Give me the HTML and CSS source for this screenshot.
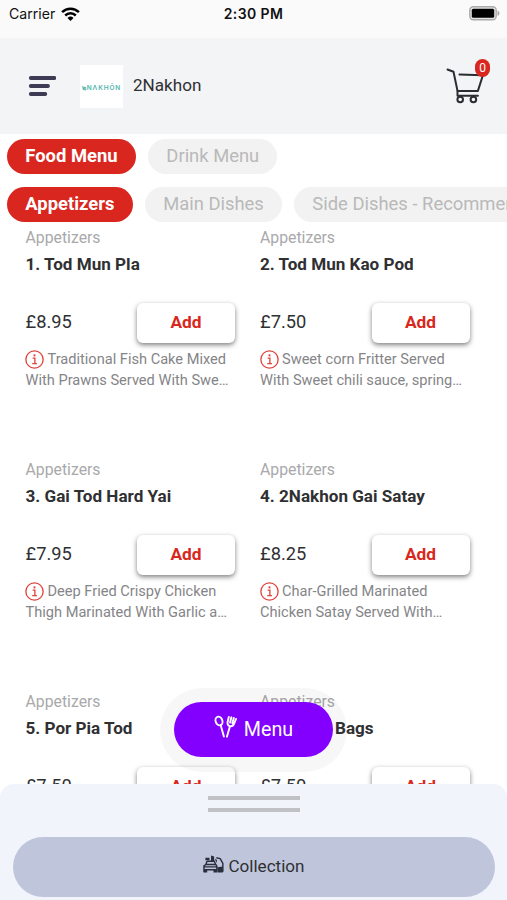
FILE: index.html
```html
<!DOCTYPE html>
<html lang="en">
<head>
<meta charset="utf-8">
<meta name="viewport" content="width=device-width, initial-scale=1">
<title>2Nakhon</title>
<link rel="stylesheet" href="styles.css">
</head>
<body>
<svg class="defs" aria-hidden="true">
  <symbol id="info" viewBox="0 0 20 20">
    <g fill="none" stroke="currentColor" stroke-width="1.4">
      <circle cx="10" cy="10" r="9.1"/>
      <path d="M8 8.6h2.4v5.6M7.6 14.4h5"/>
    </g>
    <circle cx="10" cy="5.7" r="1.1" fill="currentColor"/>
  </symbol>
</svg>
<div class="screen">
  <div class="status">
    <div class="carrier">Carrier
      <svg width="19" height="14" viewBox="0 0 19 14"><g fill="none" stroke="#000" stroke-width="2.5"><path d="M1.1 5.2a12 12 0 0 1 16.8 0"/><path d="M4.2 8.5a7.6 7.6 0 0 1 10.6 0"/></g><path d="M6.5 10.9a4.3 4.3 0 0 1 6 0l-3 3z"/></svg>
    </div>
    <div class="time">2:30 PM</div>
    <svg class="battery" width="31" height="15" viewBox="0 0 31 15"><rect x=".8" y=".8" width="26.4" height="13" rx="3.5" fill="#e4e4e4" stroke="#aaa" stroke-width="1.4"/><rect x="2.8" y="2.8" width="22.4" height="9" rx="1.5"/><path d="M28.5 4.6q2 .8 2 2.7t-2 2.7z" fill="#aaa"/></svg>
  </div>
  <header class="header">
    <svg class="burger" width="28" height="20" viewBox="0 0 28 20"><path d="M2.8 2h23.6M2.8 10h17.2M2.8 18h14.5" fill="none" stroke="#3d3b53" stroke-width="3.8" stroke-linecap="round"/></svg>
    <div class="logo"><span>๒NΛKHŌN</span></div>
    <div class="name">2Nakhon</div>
    <div class="cart">
      <svg width="38" height="36" viewBox="0 0 38 36"><g fill="none" stroke="#292d32" stroke-width="2" stroke-linecap="round" stroke-linejoin="round"><path d="M1.5 1.5l6 2.2 4 19.2h20.4l5-15.6-23.4-.9"/><path d="M11.5 23v4.8h20.4"/><circle cx="14.2" cy="31.5" r="2.8"/><circle cx="27.4" cy="31.5" r="2.8"/></g></svg>
      <span class="badge">0</span>
    </div>
  </header>
  <nav class="tabs">
    <div class="tab on food">Food Menu</div>
    <div class="tab drink">Drink Menu</div>
  </nav>
  <nav class="tabs second">
    <div class="tab on app">Appetizers</div>
    <div class="tab main">Main Dishes</div>
    <div class="tab side">Side Dishes - Recommended</div>
  </nav>
  <main class="grid">
    <article class="item">
      <div class="cat">Appetizers</div><h3>1. Tod Mun Pla</h3>
      <div class="buy"><span class="price">£8.95</span><button>Add</button></div>
      <p><svg class="info"><use href="#info"/></svg>Traditional Fish Cake Mixed<br>With Prawns Served With Swe…</p>
    </article>
    <article class="item">
      <div class="cat">Appetizers</div><h3>2. Tod Mun Kao Pod</h3>
      <div class="buy"><span class="price">£7.50</span><button>Add</button></div>
      <p><svg class="info"><use href="#info"/></svg>Sweet corn Fritter Served<br>With Sweet chili sauce, spring…</p>
    </article>
    <article class="item">
      <div class="cat">Appetizers</div><h3>3. Gai Tod Hard Yai</h3>
      <div class="buy"><span class="price">£7.95</span><button>Add</button></div>
      <p><svg class="info"><use href="#info"/></svg>Deep Fried Crispy Chicken<br>Thigh Marinated With Garlic a…</p>
    </article>
    <article class="item">
      <div class="cat">Appetizers</div><h3>4. 2Nakhon Gai Satay</h3>
      <div class="buy"><span class="price">£8.25</span><button>Add</button></div>
      <p><svg class="info"><use href="#info"/></svg>Char-Grilled Marinated<br>Chicken Satay Served With…</p>
    </article>
    <article class="item">
      <div class="cat">Appetizers</div><h3>5. Por Pia Tod</h3>
      <div class="buy"><span class="price">£7.50</span><button>Add</button></div>
    </article>
    <article class="item">
      <div class="cat">Appetizers</div><h3 class="bags">Bags</h3>
      <div class="buy"><span class="price">£7.50</span><button>Add</button></div>
    </article>
  </main>
  <div class="halo"><div class="menu">
    <svg width="23" height="24" viewBox="0 0 23 24"><g fill="none" stroke="#fff" stroke-width="1.9" stroke-linecap="round" stroke-linejoin="round"><ellipse cx="5" cy="6" rx="3.4" ry="4.4" transform="rotate(-20 5 6)"/><path d="M6.7 10.3l3.2 11.2M15.9 11.5l-3 10.2M14.8 2l-1.2 5q-.5 3.3 2.2 4.2 3 .7 4.2-2.3L22 4M17.4 2.3l-1.3 5.3M19.8 3l-1.5 5.2"/></g></svg>
    <span>Menu</span></div></div>
  <footer class="sheet">
    <div class="handle"></div>
    <div class="collect">
      <svg width="22" height="19" viewBox="0 0 22 19"><g fill="none" stroke="#2b2e3d" stroke-width="1.5" stroke-linejoin="round"><path d="M1 17.5V11l2-1.5L4.2 6h7.6l1.5 3.5 1.2 1.5v6.5M1 12h13M1.5 15h12.5M3 9.5h10"/><path d="M14 2.5l4 .8 2.8 5V17"/></g><g fill="#2b2e3d"><path d="M1 15h3.4v3H1zM11 15h3.4v3H11zM15 12.5l5.8-1V18h-5.4zM2.5 2.5h4.3V5H2.5zM8.4 0l3.3 1v5H8.4zM12.4 3.5l2.4 1.4-.8 3z"/></g></svg>
      <span>Collection</span>
    </div>
  </footer>
</div>
</body>
</html>
```
FILE: styles.css
```css
* { box-sizing: border-box; }
body { margin: 0; font-family: Roboto, "Liberation Sans", sans-serif; color: #303033; background: #fff; }
.defs { position: absolute; width: 0; height: 0; }
.screen { position: relative; width: 507px; height: 900px; overflow: hidden; background: #fff; }
.status { height: 38px; padding: 4px 7px 0 9px; display: grid; grid-template-columns: 1fr auto 1fr; align-items: start; background: #fafafa; color: #111; font-family: Inter, sans-serif; line-height: 20px; }
.carrier { display: flex; align-items: center; gap: 6px; font-size: 14.1px; }
.time { font-size: 14px; font-weight: 600; letter-spacing: .4px; margin-right: 2px; }
.battery { justify-self: end; margin-top: 2px; }
.header { height: 96px; padding: 0 18px 0 28px; display: flex; align-items: center; background: #f2f4f6; }
.logo { width: 43px; height: 43px; margin: 0 10px 0 24px; padding-top: 3px; display: flex; align-items: center; justify-content: center; background: #fff; color: #4fb5ac; font: 600 6.5px Inter, sans-serif; letter-spacing: .9px; white-space: nowrap; }
.name { font-size: 17.1px; margin-top: -3px; }
.cart { position: relative; height: 36px; margin-left: auto; margin-right: 5px; }
.badge { position: absolute; right: -6px; top: -9px; width: 15px; height: 18px; border-radius: 8px; background: #d92720; color: #fff; font-size: 12px; line-height: 18px; text-align: center; }
.tabs { height: 35px; margin: 5px 0 0 7px; display: flex; gap: 12.5px; }
.second { margin-top: 13px; }
.tab { flex: none; height: 35px; border-radius: 18px; padding: 0 18px; background: #f2f2f2; color: #b9b9b9; font-size: 18.4px; line-height: 34px; white-space: nowrap; }
.on { background: #d92720; color: #fff; font-weight: 700; padding-left: 18.3px; padding-right: 18.3px; }
.grid { padding: 5px 0 0 25.5px; display: grid; grid-template-columns: 234.5px 234.5px; grid-auto-rows: 232px; }
.item { width: 210px; }
.cat { height: 22px; font-size: 15.8px; line-height: 22px; color: #a9a9ab; }
h3 { margin: 3px 0 0; height: 25px; font-size: 17.1px; line-height: 24px; font-weight: 700; white-space: nowrap; }
.bags { padding-left: 75px; }
.buy { height: 40px; margin-top: 26px; display: flex; align-items: center; justify-content: space-between; }
.price { font-size: 18.3px; margin-top: -3px; }
button { width: 98px; height: 40px; margin-right: .5px; padding: 0 0 2px; border: 0; border-radius: 6px; background: #fff; color: #d92720; box-shadow: 0 2px 5px rgba(0,0,0,.5); font: 700 17.3px Roboto, sans-serif; }
p { margin: 6px 0 0; font-size: 14.6px; line-height: 21px; color: #858588; white-space: nowrap; }
.info { width: 19px; height: 19px; margin: 0 3.5px 0 -.5px; vertical-align: -5px; color: #df433d; line-height: 0; }
.halo { position: absolute; left: 160px; top: 688px; width: 187px; height: 84px; border-radius: 42px; padding: 14px; background: rgba(0,0,0,.03); }
.menu { height: 55px; border-radius: 28px; display: flex; align-items: center; justify-content: center; gap: 7px; background: #8300ff; color: #fff; font-size: 19.7px; }
.menu svg { margin-top: -6px; }
.sheet { position: absolute; left: 0; bottom: 0; width: 507px; height: 116px; border-radius: 14px 14px 0 0; padding: 12px 12.5px 0 13px; background: #f2f4fc; }
.handle { width: 92px; height: 16px; margin: 0 auto; border-top: 4px solid #c0c1c5; border-bottom: 4px solid #c0c1c5; }
.collect { height: 60px; margin-top: 25px; border-radius: 30px; display: flex; align-items: center; justify-content: center; gap: 4.5px; background: #bfc6dc; font-size: 17.1px; }
.collect svg { width: 21px; margin-top: -5px; }
.collect span { margin-top: -2px; }
```
